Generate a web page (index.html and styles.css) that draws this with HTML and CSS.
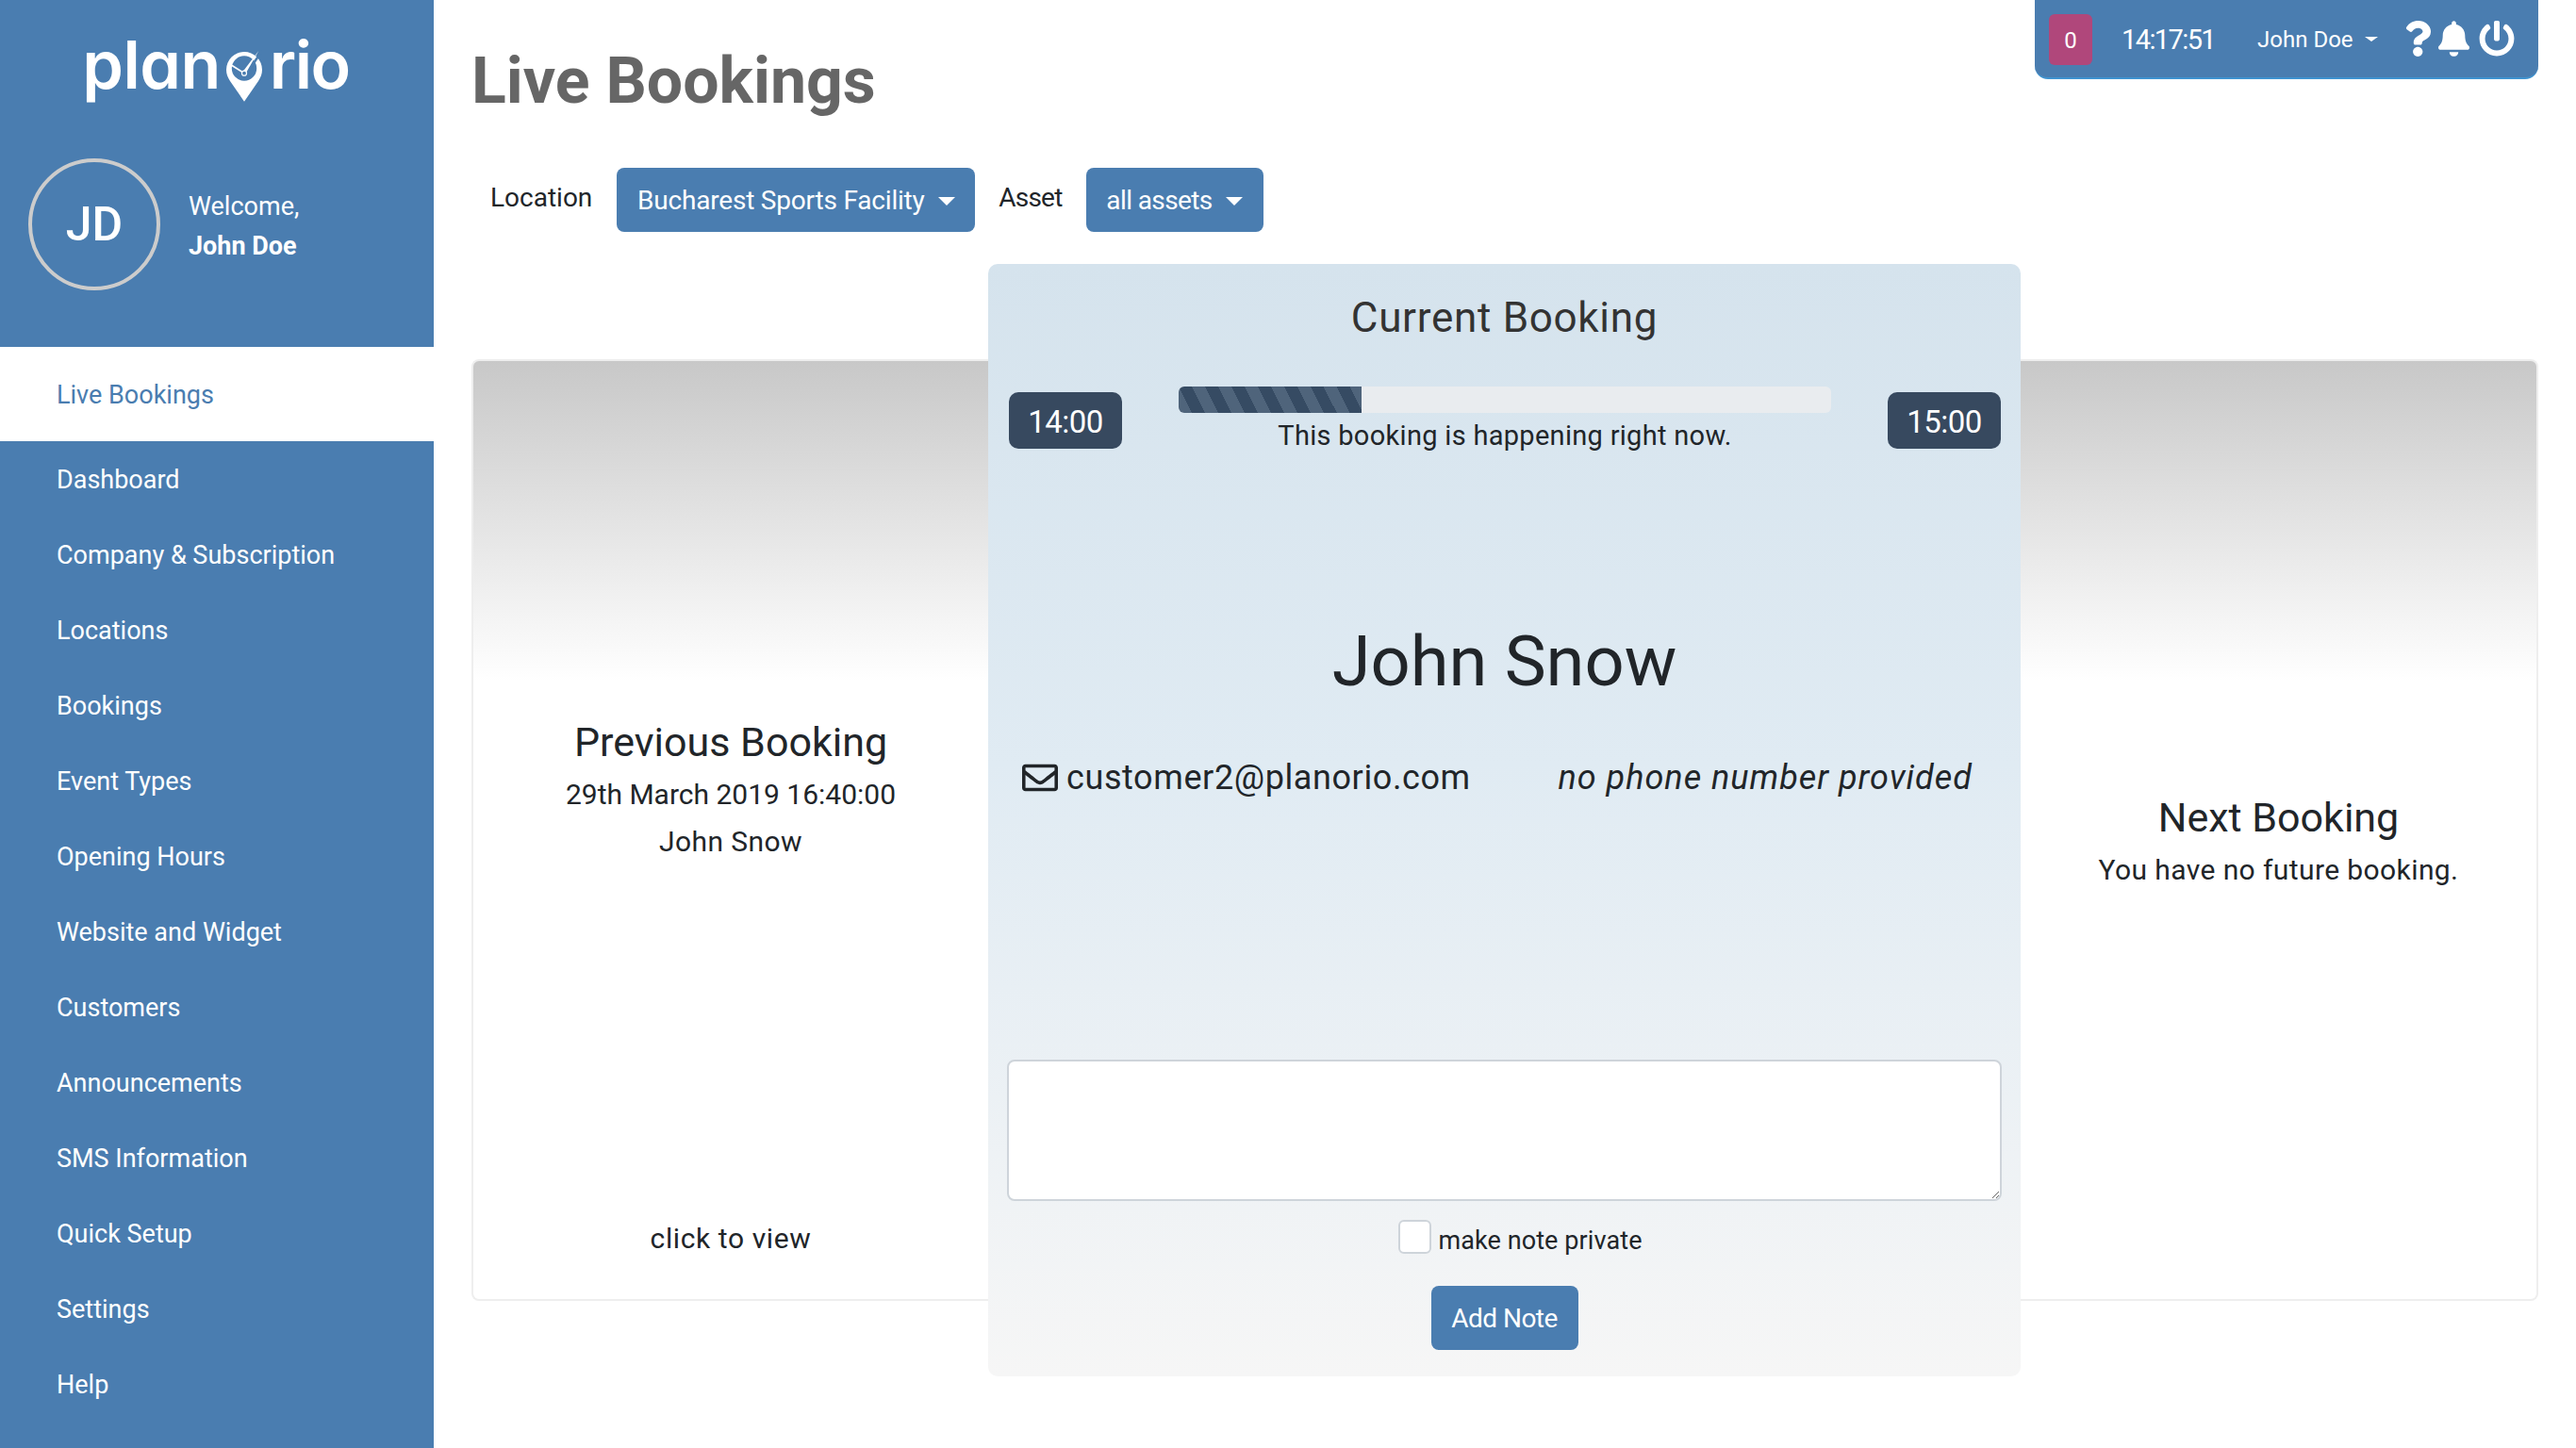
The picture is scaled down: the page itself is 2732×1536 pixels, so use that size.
FILE: index.html
```html
<!DOCTYPE html>
<html lang="en">
<head>
<meta charset="utf-8">
<title>Live Bookings</title>
<link rel="stylesheet" href="styles.css">
</head>
<body>
<div class="app">
  <aside class="sidebar">
    <div class="brand">
      <div class="logo">
        <span class="logo-plan">plan</span>
        <svg class="logo-pin" viewBox="0 -4 38 57" aria-hidden="true">
          <path fill="#fff" fill-rule="evenodd" d="M19 52.700L4 31C1.500 27 0 23.500 0 19A19 19 0 0 1 38 19C38 23.500 36.500 27 34 31ZM19 4.300A13.200 13.200 0 0 0 19 30.700A13.200 13.200 0 0 0 19 4.300Z"/>
          <path fill="none" stroke="#4a7db0" stroke-width="2.500" d="M24 19 38 -1"/>
          <path fill="#fff" d="M34.300 -1 20.500 23 17.500 21Z"/>
          <path fill="none" stroke="#fff" stroke-width="1.800" d="M5.700 14.300 18 22"/>
          <circle cx="19" cy="22.700" r="2.500" fill="#4a7db0" stroke="#fff" stroke-width="1.200"/>
        </svg>
        <span class="logo-rio">rio</span>
      </div>
      <div class="profile">
        <div class="avatar">JD</div>
        <div class="welcome">
          <div>Welcome,</div>
          <div class="welcome-name">John Doe</div>
        </div>
      </div>
    </div>
    <nav class="nav">
      <a class="nav-item active">Live Bookings</a>
      <a class="nav-item">Dashboard</a>
      <a class="nav-item">Company &amp; Subscription</a>
      <a class="nav-item">Locations</a>
      <a class="nav-item">Bookings</a>
      <a class="nav-item">Event Types</a>
      <a class="nav-item">Opening Hours</a>
      <a class="nav-item">Website and Widget</a>
      <a class="nav-item">Customers</a>
      <a class="nav-item">Announcements</a>
      <a class="nav-item">SMS Information</a>
      <a class="nav-item">Quick Setup</a>
      <a class="nav-item">Settings</a>
      <a class="nav-item">Help</a>
    </nav>
  </aside>

  <main class="main">
    <h1 class="title">Live Bookings</h1>
    <div class="filters">
      <span class="filter-label label-location">Location</span>
      <button class="btn btn-location">Bucharest Sports Facility<i class="caret"></i></button>
      <span class="filter-label label-asset">Asset</span>
      <button class="btn btn-asset">all assets<i class="caret"></i></button>
    </div>

    <section class="bookings">
      <article class="side-card prev">
        <h3 class="side-title">Previous Booking</h3>
        <div class="side-line side-date">29th March 2019 16:40:00</div>
        <div class="side-line">John Snow</div>
        <div class="side-link">click to view</div>
      </article>

      <article class="current">
        <h2 class="current-title">Current Booking</h2>
        <div class="time-row">
          <span class="chip">14:00</span>
          <div class="progress-col">
            <div class="progress"><div class="progress-fill"></div></div>
            <div class="progress-text">This booking is happening right now.</div>
          </div>
          <span class="chip">15:00</span>
        </div>
        <div class="customer">John Snow</div>
        <div class="contact">
          <span class="email">
            <svg class="mail-icon" viewBox="0 0 512 512" aria-hidden="true"><path fill="currentColor" d="M464 64H48C21.490 64 0 85.490 0 112v288c0 26.510 21.490 48 48 48h416c26.510 0 48-21.490 48-48V112c0-26.510-21.490-48-48-48zm0 48v40.805c-22.422 18.259-58.168 46.651-134.587 106.490-16.841 13.247-50.201 45.072-73.413 44.701-23.208.375-56.579-31.459-73.413-44.701C106.180 199.465 70.425 171.067 48 152.805V112h416zM48 400V214.398c22.914 18.251 55.409 43.862 104.938 82.646 21.857 17.205 60.134 55.186 103.062 54.955 42.717.231 80.509-37.199 103.053-54.947 49.528-38.783 82.032-64.401 104.947-82.653V400H48z"/></svg>
            customer2@planorio.com
          </span>
          <em class="phone">no phone number provided</em>
        </div>
        <div class="note-form">
          <textarea class="note"></textarea>
          <label class="private"><input class="check" type="checkbox"><span>make note private</span></label>
          <button class="btn btn-note">Add Note</button>
        </div>
      </article>

      <article class="side-card next">
        <h3 class="side-title">Next Booking</h3>
        <div class="side-line">You have no future booking.</div>
      </article>
    </section>
  </main>

  <div class="topbar">
    <span class="badge">0</span>
    <span class="clock">14:17:51</span>
    <span class="user">John Doe<i class="caret caret-small"></i></span>
    <svg class="icon icon-q" viewBox="0 0 384 512" aria-hidden="true"><path fill="#fff" d="M202.021 0C122.202 0 70.503 32.703 29.914 91.026c-7.363 10.580-5.093 25.086 5.178 32.874l43.138 32.709c10.373 7.865 25.132 6.026 33.253-4.148 25.049-31.381 43.630-49.449 82.757-49.449 30.764 0 68.816 19.799 68.816 49.631 0 22.552-18.617 34.134-48.993 51.164-35.423 19.860-82.299 44.576-82.299 106.405V320c0 13.255 10.745 24 24 24h72.471c13.255 0 24-10.745 24-24v-5.773c0-42.860 125.268-44.645 125.268-160.627C377.504 66.256 286.902 0 202.021 0zM192 373.459c-38.196 0-69.271 31.075-69.271 69.271 0 38.195 31.075 69.270 69.271 69.270s69.271-31.075 69.271-69.271-31.075-69.270-69.271-69.270z"/></svg>
    <svg class="icon icon-bell" viewBox="0 0 448 512" aria-hidden="true"><path fill="#fff" d="M224 512c35.320 0 63.970-28.650 63.970-64H160.030c0 35.350 28.650 64 63.970 64zm215.390-149.710c-19.320-20.760-55.470-51.990-55.470-154.290 0-77.700-54.480-139.900-127.940-155.160V32c0-17.670-14.320-32-31.980-32s-31.980 14.330-31.980 32v20.840C118.560 68.100 64.080 130.300 64.080 208c0 102.300-36.150 133.530-55.470 154.290-6 6.450-8.660 14.160-8.610 21.710.110 16.400 12.980 32 32.100 32h383.800c19.120 0 32-15.600 32.100-32 .050-7.550-2.610-15.270-8.610-21.710z"/></svg>
    <svg class="icon icon-power" viewBox="0 0 512 512" aria-hidden="true"><path fill="#fff" d="M400 54.100c63 45 104 118.600 104 201.900 0 136.800-110.800 247.700-247.500 248C120 504.300 8.200 393 8 256.400 7.900 173.100 48.900 99.300 111.800 54.200c11.700-8.300 28-4.800 35 7.700L162.600 90c5.900 10.500 3.100 23.800-6.600 31-41.500 30.800-68 79.600-68 134.900-.1 92.300 74.500 168.100 168 168.100 91.600 0 168.600-74.200 168-169.100-.3-51.800-24.700-101.800-68.100-134-9.700-7.200-12.400-20.500-6.400-30.900l15.800-27.900c7-12.400 23.200-16.100 34.800-7.800zM296 264V24c0-13.300-10.700-24-24-24h-32c-13.300 0-24 10.700-24 24v240c0 13.300 10.700 24 24 24h32c13.300 0 24-10.700 24-24z"/></svg>
  </div>
</div>
</body>
</html>
```
FILE: styles.css
```css
* { box-sizing: border-box; }
html, body { margin: 0; padding: 0; }
body {
  font-family: Roboto, "Liberation Sans", sans-serif;
  color: #212529;
  background: #fff;
}
.app {
  position: relative;
  display: flex;
  width: 2732px;
  height: 1536px;
  overflow: hidden;
}

/* Sidebar */
.sidebar {
  flex: 0 0 460px;
  display: flex;
  flex-direction: column;
  background: #4a7db0;
  color: #fff;
}
.brand {
  height: 368px;
  padding-top: 23px;
}
.logo {
  display: flex;
  align-items: baseline;
  justify-content: center;
  height: 92px;
  padding-right: 2px;
  font-family: Inter, Roboto, sans-serif;
  font-feature-settings: "cv11";
  font-size: 70px;
  font-weight: 600;
  line-height: 92px;
}
.logo-plan { letter-spacing: -.5px; }
.logo-rio { letter-spacing: -1.500px; }
.logo-pin {
  flex: none;
  width: 38px;
  height: 57px;
  margin: 28px 8px 0 6px;
  align-self: flex-start;
}
.profile {
  display: flex;
  align-items: center;
  gap: 30px;
  margin: 53px 0 0 30px;
}
.avatar {
  display: flex;
  align-items: center;
  justify-content: center;
  width: 140px;
  height: 140px;
  border: 4px solid #ccc;
  border-radius: 50%;
  font-size: 50px;
  font-weight: 500;
}
.welcome {
  padding-top: 4px;
  font-size: 27px;
  line-height: 42px;
}
.welcome-name { font-weight: 700; }
.nav {
  display: flex;
  flex-direction: column;
}
.nav-item {
  display: flex;
  align-items: center;
  height: 80px;
  padding-left: 60px;
  font-size: 27px;
}
.nav-item.active {
  height: 100px;
  margin-bottom: 1px;
  padding-top: 2px;
  background: #fff;
  color: #4a7db0;
}

/* Main */
.main {
  flex: 1;
  min-width: 0;
  padding: 0 40px;
}
.title {
  margin: 0;
  padding-top: 41px;
  height: 130px;
  font-size: 68px;
  font-weight: 700;
  line-height: 90px;
  color: #666;
}
.filters {
  display: flex;
  align-items: flex-start;
  height: 68px;
  margin-top: 48px;
}
.filter-label {
  font-size: 28px;
  line-height: 63px;
}
.label-location { margin: 0 26px 0 20px; }
.label-asset { margin: 0 25px; letter-spacing: -.8px; }
.btn {
  border: 0;
  border-radius: 8px;
  height: 68px;
  background: #4a7db0;
  color: #fff;
  font-family: inherit;
  font-size: 28px;
  letter-spacing: -.2px;
}
.btn-location { width: 380px; }
.btn-asset { width: 188px; letter-spacing: -.6px; }
.caret {
  display: inline-block;
  margin-left: 14px;
  vertical-align: 4px;
  border-top: 9px solid #fff;
  border-left: 9px solid transparent;
  border-right: 9px solid transparent;
}

/* Booking cards */
.bookings {
  display: flex;
  height: 999px;
  margin-top: 135px;
}
.side-card {
  flex: 1;
  min-width: 0;
  display: flex;
  flex-direction: column;
  align-items: center;
  border: 2px solid #eee;
  border-radius: 8px;
  background: linear-gradient(180deg, #c8c8c8 0, #fff 340px);
  font-size: 30px;
}
.side-title {
  margin: 0 0 1px;
  font-size: 43px;
  font-weight: 400;
  line-height: 60px;
}
.side-line { line-height: 50px; letter-spacing: .4px; }
.side-date { letter-spacing: 0; }
.prev { flex: 0 0 548px; padding-top: 374px; border-right: 0; border-radius: 8px 0 0 8px; }
.next { padding-top: 454px; border-left: 0; border-radius: 0 8px 8px 0; }
.side-link { margin-top: auto; padding-bottom: 39px; line-height: 50px; letter-spacing: .6px; }

.current {
  flex: 0 0 1095px;
  display: flex;
  flex-direction: column;
  margin: -101px 0 -80px;
  border-radius: 10px;
  background: linear-gradient(180deg, #d5e3ed 0, #e0ebf3 45%, #f6f6f6 100%);
  position: relative;
}
.current-title {
  margin: 27px 0 0;
  font-size: 44px;
  font-weight: 400;
  line-height: 60px;
  letter-spacing: .7px;
  text-align: center;
  color: #333;
}
.time-row {
  display: flex;
  align-items: flex-start;
  margin: 43px 21px 0 22px;
}
.chip {
  flex: 0 0 120px;
  height: 60px;
  margin-top: 6px;
  border-radius: 10px;
  background: #37495f;
  color: #fff;
  font-size: 33px;
  line-height: 64px;
  letter-spacing: -.5px;
  text-align: center;
}
.progress-col {
  flex: 1;
  margin: 0 60px;
  text-align: center;
}
.progress {
  height: 28px;
  border-radius: 6px;
  overflow: hidden;
  background: #e9ecef;
}
.progress-fill {
  width: 194px;
  height: 100%;
  background-image: repeating-linear-gradient(63.4deg, #4f647b 0 12.5px, #364b63 12.5px 25px);
}
.progress-text {
  font-size: 29px;
  line-height: 48px;
  letter-spacing: .3px;
}
.customer {
  margin-top: 171px;
  font-size: 74px;
  line-height: 90px;
  text-align: center;
}
.contact {
  display: flex;
  justify-content: space-between;
  align-items: center;
  margin-top: 53px;
  padding: 0 51px 0 36px;
  font-size: 36px;
  line-height: 50px;
}
.email { display: flex; align-items: center; gap: 9px; letter-spacing: .6px; }
.phone { letter-spacing: 1px; }
.mail-icon { width: 38px; height: 38px; }
.note-form {
  margin-top: auto;
  padding: 0 20px 28px;
  display: flex;
  flex-direction: column;
  align-items: center;
}
.note {
  display: block;
  width: 100%;
  height: 150px;
  border: 2px solid #ced4da;
  border-radius: 8px;
  background: #fff;
  outline: 0;
}
.private {
  display: flex;
  align-items: flex-end;
  gap: 7px;
  height: 36px;
  margin: 20px 0 34px;
  padding-left: 34px;
  font-size: 27px;
  line-height: 27px;
  letter-spacing: .1px;
}
.check {
  appearance: none;
  flex: none;
  width: 35px;
  height: 36px;
  margin: 0;
  border: 2px solid #ced4da;
  border-radius: 6px;
  background: #fff;
}
.btn-note { width: 156px; letter-spacing: -.5px; }

/* Top bar */
.topbar {
  position: absolute;
  top: 0;
  right: 40px;
  width: 534px;
  height: 84px;
  display: flex;
  align-items: center;
  padding: 0 25px 0 15px;
  border-bottom: 2px solid #3f93d0;
  border-radius: 0 0 14px 14px;
  background: #4a7db0;
  color: #fff;
  white-space: nowrap;
}
.badge {
  flex: none;
  width: 46px;
  height: 54px;
  margin-top: 1px;
  border-radius: 6px;
  background: #b0477b;
  font-size: 24px;
  line-height: 56px;
  text-align: center;
}
.clock { margin-left: 31px; padding-top: 2px; font-size: 29px; letter-spacing: -1.6px; }
.user { margin-left: 45px; padding-top: 2px; font-size: 24px; }
.caret-small {
  margin-left: 12px;
  vertical-align: 6px;
  border-top-width: 5px;
  border-left-width: 7px;
  border-right-width: 7px;
}
.icon { height: 38px; flex: none; }
.icon-q { width: 28.500px; margin-left: auto; }
.icon-bell { width: 33px; margin-left: 8px; }
.icon-power { width: 38px; margin-left: 10px; }
```
